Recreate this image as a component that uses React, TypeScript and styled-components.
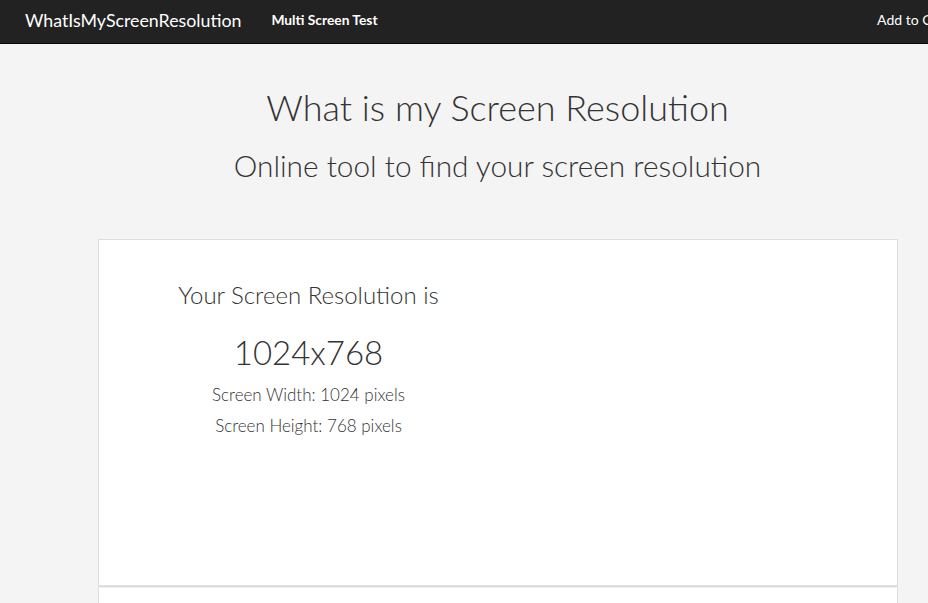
import React from "react";
import styled, { createGlobalStyle } from "styled-components";

const Global = createGlobalStyle`
  html, body { margin: 0; padding: 0; overflow: hidden; }
  body { background: #f4f4f4; font-family: "Lato", "Open Sans", sans-serif; color: #333; }
`;

const Page = styled.div`
  width: 995px;
`;

const Nav = styled.nav`
  height: 44px;
  background: #222;
  border-bottom: 1px solid #080808;
  display: flex;
  align-items: center;
  padding: 0 25px 4px;
  box-sizing: border-box;
  color: #fff;
`;

const Brand = styled.div`
  font-size: 17.8px;
  font-weight: 400;
  margin-right: 30px;
`;

const NavLink = styled.div`
  font-size: 13.8px;
  font-weight: 700;
`;

const Spacer = styled.div`
  flex: 1;
`;

const NavRight = styled.div`
  font-size: 14px;
  font-weight: 400;
  margin-right: -1px;
`;

const Header = styled.header`
  text-align: center;
  padding-top: 41px;
  box-sizing: border-box;
  height: 195px;
`;

const Title = styled.h1`
  margin: 0;
  font-size: 36px;
  font-weight: 300;
  line-height: 44px;
`;

const Subtitle = styled.h2`
  margin: 20px 0 0;
  font-size: 29.8px;
  font-weight: 300;
  line-height: 34px;
`;

const Card = styled.section`
  margin: 0 auto;
  width: 800px;
  box-sizing: border-box;
  background: #fff;
  border: 1px solid #ddd;
  border-bottom-width: 2px;
  height: 348px;
  display: grid;
  grid-template-columns: 420px 1fr;
`;

const NextCard = styled.section`
  margin: 0 auto;
  width: 800px;
  box-sizing: border-box;
  background: #fff;
  border: 1px solid #ddd;
  border-top-color: #eee;
  height: 60px;
`;

const Col = styled.div`
  text-align: center;
  padding-top: 40px;
`;

const Lead = styled.div`
  font-size: 24px;
  font-weight: 300;
  line-height: 30px;
`;

const Big = styled.div`
  margin-top: 20px;
  margin-bottom: 5px;
  font-size: 33px;
  font-weight: 300;
  line-height: 44px;
`;

const Detail = styled.div`
  font-size: 17px;
  font-weight: 300;
  line-height: 31px;
`;

export default function App() {
  return (
    <Page>
      <Global />
      <Nav>
        <Brand>WhatIsMyScreenResolution</Brand>
        <NavLink>Multi Screen Test</NavLink>
        <Spacer />
        <NavRight>Add to Chrome</NavRight>
      </Nav>
      <Header>
        <Title>What is my Screen Resolution</Title>
        <Subtitle>Online tool to find your screen resolution</Subtitle>
      </Header>
      <Card>
        <Col>
          <Lead>Your Screen Resolution is</Lead>
          <Big>1024x768</Big>
          <Detail>Screen Width: 1024 pixels</Detail>
          <Detail>Screen Height: 768 pixels</Detail>
        </Col>
        <div />
      </Card>
      <NextCard />
    </Page>
  );
}
